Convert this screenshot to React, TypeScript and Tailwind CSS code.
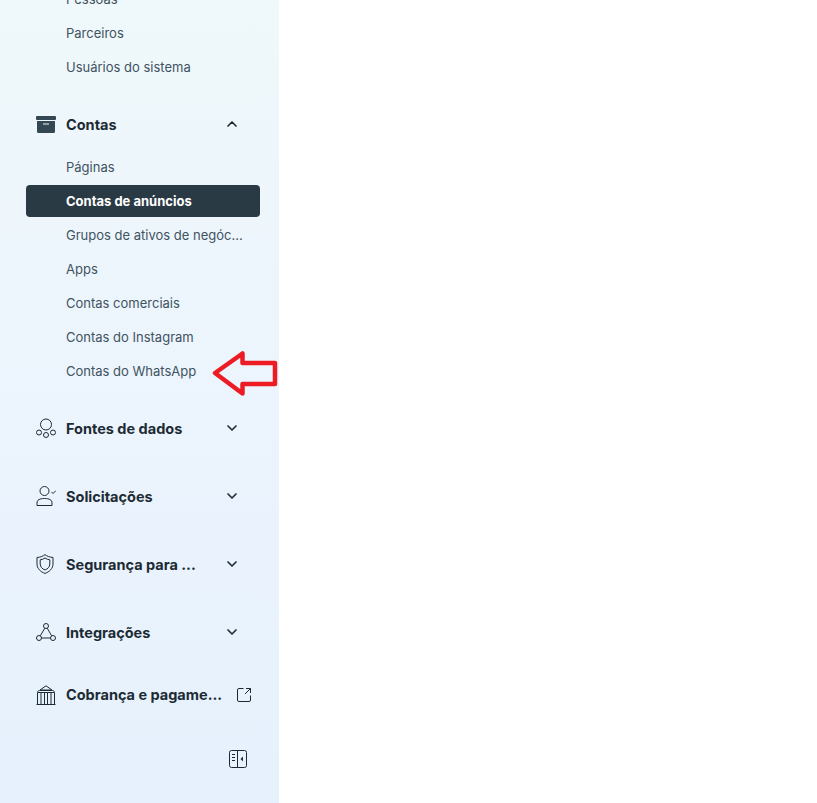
import React from "react";
import { ChevronDown, ChevronUp } from "lucide-react";

const Archive = () => (
  <svg width="20" height="17" viewBox="0 0 20 17" fill="#344854">
    <rect x="0" y="0" width="20" height="4" rx="1" />
    <path d="M1 5h18v10.5a1.5 1.5 0 0 1-1.5 1.5h-15A1.5 1.5 0 0 1 1 15.500zM7 7.500v1h6v-1z" fillRule="evenodd" />
  </svg>
);

const Sources = () => (
  <svg width="20" height="20" viewBox="0 0 20 20" fill="none" stroke="#1c2b33" strokeWidth="1">
    <circle cx="10" cy="6.500" r="5.500" />
    <circle cx="3" cy="14.500" r="2.500" />
    <circle cx="10" cy="17" r="2.500" />
    <circle cx="17" cy="14.500" r="2.500" />
  </svg>
);

const Requests = () => (
  <svg width="20" height="20" viewBox="0 0 20 20" fill="none" stroke="#1c2b33" strokeWidth="1">
    <circle cx="8.500" cy="5" r="4.500" />
    <path d="M1 19.500v-2.500C1 14 3.500 12.500 8.500 12.500S16 14 16 17v2.500z" />
    <path d="M15.500 6l1.500 1.500 3-3" />
  </svg>
);

const Shield = () => (
  <svg width="18" height="20" viewBox="0 0 18 20" fill="none" stroke="#1c2b33" strokeWidth="1">
    <path d="M9 .6c2 1.700 5 2.700 8 2.900v6.500c0 4.500-3.500 7.800-8 9.400-4.500-1.600-8-4.900-8-9.400V3.500C4 3.300 7 2.300 9 .6z" />
    <path d="M9 4c1.300 1 3 1.600 4.800 1.800v4.200c0 2.800-2 4.900-4.800 6-2.800-1.100-4.800-3.200-4.800-6V5.800C6 5.600 7.700 5 9 4z" />
  </svg>
);

const Integrations = () => (
  <svg width="20" height="18" viewBox="0 0 20 18" fill="none" stroke="#1c2b33" strokeWidth="1">
    <circle cx="10" cy="3" r="2.500" />
    <circle cx="3" cy="15" r="2.500" />
    <circle cx="17" cy="15" r="2.500" />
    <path d="M8.800 5.200L4.300 12.800M11.200 5.200l4.500 7.600M5.500 15h9" />
  </svg>
);

const Bank = () => (
  <svg width="20" height="20" viewBox="0 0 20 20" fill="none" stroke="#1c2b33" strokeWidth="1">
    <path d="M10 .8L16 5H4z" />
    <path d="M1.500 7.500c0-1.200 1-2 2-2h13c1 0 2 .8 2 2z" />
    <path d="M.5 19.500h19M1.500 8v11.500M18.500 8v11.500M5 8v11.500M8.500 8v11.500M11.500 8v11.500M15 8v11.500" />
  </svg>
);

const ExternalLink = () => (
  <svg width="14" height="14" viewBox="0 0 14 14" fill="none" stroke="#1c2b33" strokeWidth="1">
    <path d="M6.500.5H2A1.500 1.500 0 0 0 .5 2v10A1.500 1.500 0 0 0 2 13.500h10a1.500 1.500 0 0 0 1.500-1.500V7.500" />
    <path d="M8 6l5.500-5.500M9 .5h4.500V5" />
  </svg>
);

const Collapse = () => (
  <svg width="18" height="18" viewBox="0 0 18 18" fill="none" stroke="#1c2b33" strokeWidth="1">
    <rect x=".5" y=".5" width="17" height="17" rx="2" />
    <path d="M8.500.5v17M3 4.500h3M3 7.500h3M3 10.500h3" />
    <path d="M14 6.500v5L11.500 9z" fill="#1c2b33" stroke="none" />
  </svg>
);

const SubItem = ({ label, active }: { label: string; active?: boolean }) => (
  <div
    className={
      active
        ? "my-px ml-[26px] mr-[19px] h-8 flex items-center pl-10 pt-0.5 rounded bg-[#2a3a45] text-white font-bold text-[13px]"
        : "h-[34px] flex items-center pl-[66px] pt-0.5 text-[#3f5361] text-[13px]"
    }
  >
    {label}
  </div>
);

const Section = ({
  icon,
  label,
  open,
  right,
  labelClass = "mt-0.5",
}: {
  icon: React.ReactNode;
  label: string;
  open?: boolean;
  right?: React.ReactNode;
  labelClass?: string;
}) => (
  <div className="h-[52px] flex items-center pl-9 text-[#1c2b33]">
    <div className="w-[30px] flex items-center">{icon}</div>
    <span className={`flex-1 font-bold text-[14.500px] whitespace-nowrap ${labelClass}`}>{label}</span>
    {right ?? (
      <div className="w-[18px] mr-[38px] ml-3 flex justify-center">
        {open ? <ChevronUp size={16} strokeWidth={2.500} /> : <ChevronDown size={16} strokeWidth={2.500} />}
      </div>
    )}
  </div>
);

export default function App() {
  return (
    <div
      className="relative h-[803px] w-[817px] overflow-hidden bg-white"
      style={{ fontFamily: "Inter, 'Noto Sans', sans-serif" }}
    >
      <aside className="h-full w-[279px] overflow-hidden bg-gradient-to-b from-[#eff8fa] via-[#ecf4fd] to-[#e6f1fd]">
        <div className="-mt-[18px]">
          <SubItem label="Pessoas" />
          <SubItem label="Parceiros" />
          <SubItem label="Usuários do sistema" />
        </div>

        <div className="pt-[14px]">
          <Section icon={<Archive />} label="Contas" open />
          <SubItem label="Páginas" />
          <SubItem label="Contas de anúncios" active />
          <SubItem label="Grupos de ativos de negóc..." />
          <SubItem label="Apps" />
          <SubItem label="Contas comerciais" />
          <SubItem label="Contas do Instagram" />
          <SubItem label="Contas do WhatsApp" />
        </div>

        <div className="pt-[14px] flex flex-col gap-4">
          <Section icon={<Sources />} label="Fontes de dados" />
          <Section icon={<Requests />} label="Solicitações" />
          <Section icon={<Shield />} label="Segurança para ..." />
          <Section icon={<Integrations />} label="Integrações" />
        </div>

        <div className="mt-[11px]">
          <Section
            icon={<Bank />}
            label="Cobrança e pagame..."
            labelClass="mt-0"
            right={
              <div className="mr-[28px] flex items-center">
                <ExternalLink />
              </div>
            }
          />
        </div>

        <div className="mt-[29px] flex justify-end pr-[32px]">
          <Collapse />
        </div>
      </aside>

      <svg className="absolute left-[211px] top-[349px]" width="68" height="50" viewBox="0 0 68 50" fill="none">
        <path
          d="M4 24L31.500 4.500V14H64v21H31.500v9.500z"
          stroke="#ed1c24"
          strokeWidth="4.500"
          strokeLinejoin="round"
        />
      </svg>
    </div>
  );
}
